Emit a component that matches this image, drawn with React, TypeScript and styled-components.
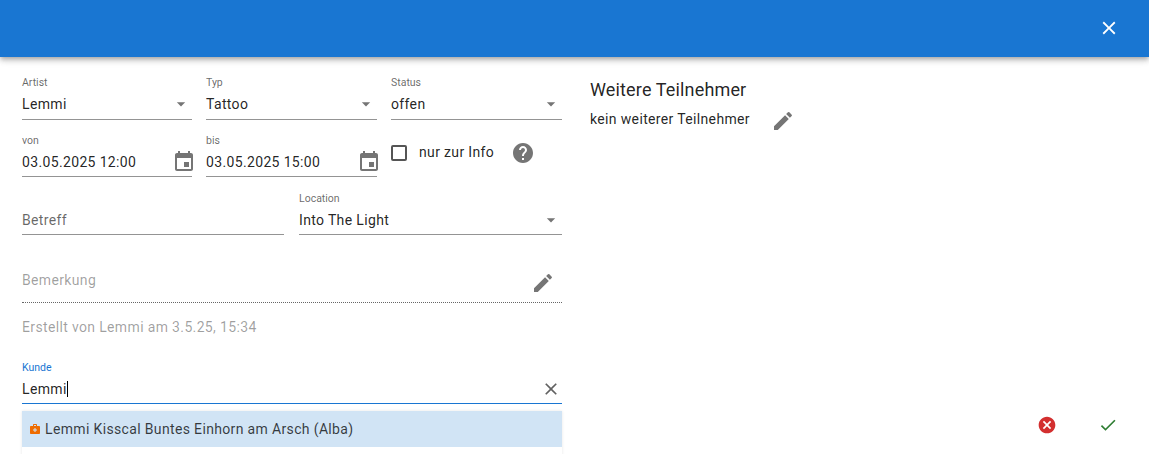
import React from 'react';
import styled, { createGlobalStyle } from 'styled-components';

const GlobalStyle = createGlobalStyle`
  html, body {
    margin: 0;
    padding: 0;
    height: 100%;
    background: #fff;
    overflow: hidden;
  }

  body {
    font-family: Roboto, "Liberation Sans", sans-serif;
    color: rgba(0, 0, 0, 0.87);
  }
`;

const CaretIcon = () => (
  <CaretSvg viewBox="0 0 24 24">
    <path d="M7 10l5 5 5-5z" />
  </CaretSvg>
);

const CalendarIcon = () => (
  <IconSvg viewBox="0 0 24 24">
    <path d="M17 12h-5v5h5v-5zM16 1v2H8V1H6v2H5c-1.11 0-1.99.9-1.99 2L3 19c0 1.1.89 2 2 2h14c1.1 0 2-.9 2-2V5c0-1.1-.9-2-2-2h-1V1h-2zm3 18H5V8h14v11z" />
  </IconSvg>
);

const PencilIcon = () => (
  <PencilSvg viewBox="0 0 24 24">
    <path d="M3 17.25V21h3.75L17.81 9.94l-3.75-3.75L3 17.25zM20.71 7.04c.39-.39.39-1.02 0-1.41l-2.34-2.34a.9959.9959 0 0 0-1.41 0l-1.83 1.83 3.75 3.75 1.83-1.83z" />
  </PencilSvg>
);

const HelpIcon = () => (
  <IconSvg viewBox="0 0 24 24">
    <path d="M12 2C6.48 2 2 6.48 2 12s4.48 10 10 10 10-4.48 10-10S17.52 2 12 2zm1 17h-2v-2h2v2zm2.07-7.75l-.9.92C13.45 12.9 13 13.5 13 15h-2v-.5c0-1.1.45-2.1 1.17-2.83l1.24-1.26c.37-.36.59-.86.59-1.41 0-1.1-.9-2-2-2s-2 .9-2 2H8c0-2.21 1.79-4 4-4s4 1.79 4 4c0 .88-.36 1.68-.93 2.25z" />
  </IconSvg>
);

const CloseIcon = ({ size }: { size: number }) => (
  <svg viewBox="0 0 24 24" width={size} height={size} fill="currentColor">
    <path d="M19 6.41L17.59 5 12 10.59 6.41 5 5 6.41 10.59 12 5 17.59 6.41 19 12 13.41 17.59 19 19 17.59 13.41 12z" />
  </svg>
);

const CancelIcon = () => (
  <svg viewBox="0 0 24 24" width="20" height="20" fill="#d32f2f">
    <path d="M12 2C6.47 2 2 6.47 2 12s4.47 10 10 10 10-4.47 10-10S17.53 2 12 2zm5 13.59L15.59 17 12 13.41 8.41 17 7 15.59 10.59 12 7 8.41 8.41 7 12 10.59 15.59 7 17 8.41 13.41 12 17 15.59z" />
  </svg>
);

const CheckIcon = () => (
  <svg viewBox="0 0 24 24" width="20" height="20" fill="#2e7d32">
    <path d="M9 16.17L4.83 12l-1.42 1.41L9 19 21 7l-1.41-1.41z" />
  </svg>
);

const CustomerIcon = () => (
  <svg viewBox="0 0 24 24" width="12" height="12" fill="#ef6c00">
    <path d="M20 6h-4V4c0-1.1-.9-2-2-2h-4c-1.1 0-2 .9-2 2v2H4c-1.1 0-2 .9-2 2v12c0 1.1.9 2 2 2h16c1.1 0 2-.9 2-2V8c0-1.1-.9-2-2-2zM10 4h4v2h-4V4zm6 11h-3v3h-2v-3H8v-2h3v-3h2v3h3v2z" />
  </svg>
);

const SelectField = ({ label, value, compact }: { label: string; value: string; compact?: boolean }) => (
  <Field>
    <FieldLabel>{label}</FieldLabel>
    <Control $compact={compact}>
      <Value>{value}</Value>
      <CaretIcon />
    </Control>
  </Field>
);

const DateField = ({ label, value }: { label: string; value: string }) => (
  <Field>
    <FieldLabel>{label}</FieldLabel>
    <Control $compact>
      <Value>{value}</Value>
      <CalendarSlot>
        <CalendarIcon />
      </CalendarSlot>
    </Control>
  </Field>
);

const App: React.FC = () => (
  <Page>
    <GlobalStyle />
    <AppBar>
      <CloseButton>
        <CloseIcon size={22} />
      </CloseButton>
    </AppBar>
    <Body>
      <FormColumn>
        <ThreeColumns>
          <SelectField label="Artist" value="Lemmi" />
          <SelectField label="Typ" value="Tattoo" />
          <SelectField label="Status" value="offen" />
        </ThreeColumns>
        <DateRow>
          <DateField label="von" value="03.05.2025 12:00" />
          <DateField label="bis" value="03.05.2025 15:00" />
          <InfoCell>
            <CheckBox />
            <InfoText>nur zur Info</InfoText>
            <HelpSlot>
              <HelpIcon />
            </HelpSlot>
          </InfoCell>
        </DateRow>
        <TwoColumns>
          <Field>
            <FieldLabel />
            <Control $compact>
              <Placeholder>Betreff</Placeholder>
            </Control>
          </Field>
          <SelectField label="Location" value="Into The Light" compact />
        </TwoColumns>
        <RemarkRow>
          <MutedText>Bemerkung</MutedText>
          <PencilIcon />
        </RemarkRow>
        <CreatedText>Erstellt von Lemmi am 3.5.25, 15:34</CreatedText>
        <CustomerField>
          <FocusedLabel>Kunde</FocusedLabel>
          <FocusedControl $compact>
            <Value>
              Lemmi
              <Cursor />
            </Value>
            <ClearSlot>
              <CloseIcon size={20} />
            </ClearSlot>
          </FocusedControl>
          <Dropdown>
            <Option>
              <CustomerIcon />
              <span>Lemmi Kisscal Buntes Einhorn am Arsch (Alba)</span>
            </Option>
          </Dropdown>
        </CustomerField>
      </FormColumn>
      <SideColumn>
        <SideTitle>Weitere Teilnehmer</SideTitle>
        <ParticipantRow>
          <span>kein weiterer Teilnehmer</span>
          <PencilIcon />
        </ParticipantRow>
        <Actions>
          <CancelIcon />
          <CheckIcon />
        </Actions>
      </SideColumn>
    </Body>
  </Page>
);

export default App;

const Page = styled.div`
  display: flex;
  flex-direction: column;
  width: 1149px;
  height: 454px;
  overflow: hidden;
  background: #fff;
`;

const AppBar = styled.header`
  flex: none;
  position: relative;
  z-index: 1;
  display: flex;
  align-items: center;
  justify-content: flex-end;
  box-sizing: border-box;
  height: 57px;
  padding: 0 29px 2px 0;
  background: #1976d2;
  box-shadow: 0 2px 4px -1px rgba(0, 0, 0, 0.2), 0 4px 5px 0 rgba(0, 0, 0, 0.14), 0 1px 10px 0 rgba(0, 0, 0, 0.12);
  color: #fff;
`;

const CloseButton = styled.div`
  display: flex;
`;

const Body = styled.main`
  flex: 1;
  display: flex;
  min-height: 0;
`;

const FormColumn = styled.section`
  flex: none;
  display: flex;
  flex-direction: column;
  box-sizing: border-box;
  width: 562px;
  padding: 19px 0 0 22px;

  > * {
    flex: none;
  }
`;

const ThreeColumns = styled.div`
  display: grid;
  grid-template-columns: 170px 171px 171px;
  column-gap: 14px;
`;

const DateRow = styled(ThreeColumns)`
  margin-top: 14px;
`;

const TwoColumns = styled.div`
  display: grid;
  grid-template-columns: 262px 263px;
  column-gap: 15px;
  margin-top: 15px;
`;

const Field = styled.div`
  display: flex;
  flex-direction: column;
  min-width: 0;
`;

const FieldLabel = styled.label`
  height: 14px;
  font-size: 10.5px;
  line-height: 14px;
  color: rgba(0, 0, 0, 0.6);
`;

const FocusedLabel = styled(FieldLabel)`
  color: #1976d2;
`;

const Control = styled.div<{ $compact?: boolean }>`
  flex: none;
  display: flex;
  align-items: center;
  justify-content: space-between;
  height: ${({ $compact }) => ($compact ? '29px' : '30px')};
  padding-bottom: ${({ $compact }) => ($compact ? '1px' : '2px')};
  box-sizing: border-box;
  border-bottom: 1px solid rgba(0, 0, 0, 0.42);
`;

const FocusedControl = styled(Control)`
  border-bottom-color: #1976d2;
`;

const Value = styled.span`
  font-size: 14px;
  letter-spacing: 0.35px;
  white-space: nowrap;
`;

const Placeholder = styled(Value)`
  color: rgba(0, 0, 0, 0.6);
`;

const Cursor = styled.i`
  display: inline-block;
  width: 1px;
  height: 16px;
  vertical-align: -3px;
  background: #000;
`;

const IconSvg = styled.svg`
  flex: none;
  width: 24px;
  height: 24px;
  fill: #757575;
`;

const CaretSvg = styled(IconSvg)`
  width: 20px;
  height: 20px;
  margin: 1px 1px 0 0;
`;

const PencilSvg = styled(IconSvg)`
  margin-top: 6px;
`;

const CalendarSlot = styled.span`
  display: flex;
  margin-right: -4px;
`;

const ClearSlot = styled.span`
  display: flex;
  margin-right: 1px;
  color: #616161;
`;

const InfoCell = styled.div`
  display: flex;
  align-items: flex-start;
  padding-top: 11px;
`;

const CheckBox = styled.span`
  flex: none;
  box-sizing: border-box;
  width: 16px;
  height: 16px;
  border: 2px solid #555;
  border-radius: 2px;
`;

const InfoText = styled.span`
  margin: -1px 0 0 12px;
  font-size: 14px;
  line-height: 16px;
  letter-spacing: 0.35px;
`;

const HelpSlot = styled.span`
  display: flex;
  margin: -4px 0 0 17px;
`;

const RemarkRow = styled.div`
  display: flex;
  align-items: center;
  justify-content: space-between;
  box-sizing: border-box;
  height: 46px;
  margin-top: 22px;
  padding-right: 7px;
  border-bottom: 1px dotted rgba(0, 0, 0, 0.6);
`;

const MutedText = styled.span`
  font-size: 14px;
  letter-spacing: 0.35px;
  color: rgba(0, 0, 0, 0.38);
`;

const CreatedText = styled(MutedText)`
  margin-top: 16px;
  line-height: 17px;
`;

const CustomerField = styled(Field)`
  margin-top: 25px;
`;

const Dropdown = styled.div`
  flex: none;
  margin-top: 7px;
  height: 60px;
  background: #fff;
  box-shadow: 0 0 3px 0 rgba(0, 0, 0, 0.1);
`;

const Option = styled.div`
  display: flex;
  align-items: center;
  gap: 4px;
  box-sizing: border-box;
  height: 36px;
  padding: 0 0 1px 7px;
  background: #d1e4f5;
  font-size: 14px;
  letter-spacing: 0.35px;
  color: rgba(0, 0, 0, 0.75);
`;

const SideColumn = styled.aside`
  flex: 1;
  display: flex;
  flex-direction: column;
  padding: 21px 31px 0 28px;
`;

const SideTitle = styled.h2`
  margin: 0;
  font-size: 18px;
  font-weight: 400;
  line-height: 23px;
  letter-spacing: 0.15px;
`;

const ParticipantRow = styled.div`
  display: flex;
  align-items: center;
  gap: 21px;
  height: 24px;
  margin-top: 6px;
  font-size: 14px;
  letter-spacing: 0.35px;

  svg {
    margin-top: 4px;
  }
`;

const Actions = styled.div`
  display: flex;
  gap: 41px;
  justify-content: flex-end;
  margin-top: auto;
  margin-bottom: 19px;
`;
